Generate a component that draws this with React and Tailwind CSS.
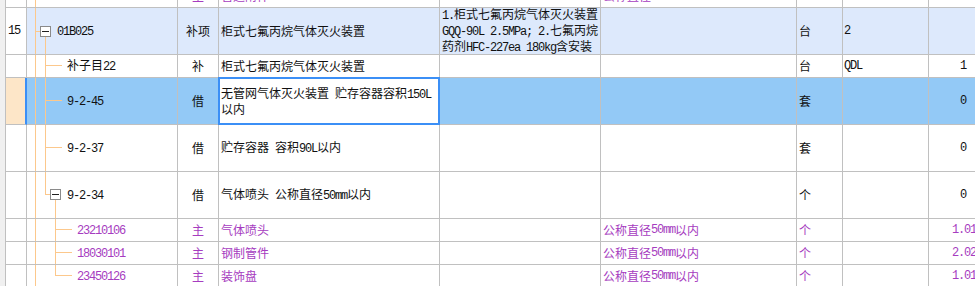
import React from "react";

const LINE = "border-[#c0c0c0]";
const MONO = "font-['Liberation_Mono',monospace] text-[12px] tracking-[-1.2px] whitespace-pre";
const PURPLE = "text-[#a63cc0]";
const INK = "text-[#111111]";
const TREE = "#fcc88c";

// Splits a label into half-width (ASCII) and full-width runs so Latin text sits on a 6px grid
function Mixed({ text }) {
  const parts = text.split(/([\x20-\x7e]+)/).filter((p) => p.length);
  return parts.map((p, i) =>
    /^[\x20-\x7e]+$/.test(p) ? (
      <span key={i} className={MONO}>
        {p}
      </span>
    ) : (
      <span key={i}>{p}</span>
    )
  );
}

// Tree connector pieces, drawn in the code column's own coordinates
const V = (x, y1, y2) => <line key={`v${x}${y1}`} x1={x + 0.5} y1={y1} x2={x + 0.5} y2={y2} stroke={TREE} />;
const H = (x1, x2, y) => <line key={`h${x1}${y}`} x1={x1} y1={y + 0.5} x2={x2} y2={y + 0.5} stroke={TREE} />;
const Box = (x, y) => (
  <g key={`b${x}${y}`}>
    <rect x={x + 0.5} y={y + 0.5} width="10" height="10" fill="#fff" stroke="#8a8a8a" />
    <line x1={x + 2} y1={y + 5.5} x2={x + 9} y2={y + 5.5} stroke="#202020" />
  </g>
);

const rows = [
  {
    h: 23,
    purple: true,
    tree: [V(8, 0, 22)],
    type: "主",
    name: ["管道附件"],
    spec2: "公称直径",
  },
  {
    h: 47,
    bg: "bg-[#dde9fc]",
    num: "15",
    tree: [V(8, 0, 46), H(8, 13, 23), Box(13, 18), V(18, 29, 46)],
    indent: "pl-[30px]",
    code: "01B025",
    type: "补项",
    name: ["柜式七氟丙烷气体灭火装置"],
    spec1: ["1.柜式七氟丙烷气体灭火装置", "GQQ-90L 2.5MPa; 2.七氟丙烷", "药剂HFC-227ea 180kg含安装"],
    unit: "台",
    expr: "2",
  },
  {
    h: 23,
    tree: [V(8, 0, 22), V(18, 0, 22), H(18, 35, 10)],
    indent: "pl-[40px]",
    code: "补子目22",
    type: "补",
    name: ["柜式七氟丙烷气体灭火装置"],
    unit: "台",
    expr: "QDL",
    qty: "1",
  },
  {
    h: 47,
    bg: "bg-[#93c9f6]",
    selected: true,
    tree: [V(8, 0, 46), V(18, 0, 46), H(18, 35, 22)],
    indent: "pl-[40px]",
    code: "9-2-45",
    type: "借",
    name: ["无管网气体灭火装置 贮存容器容积150L", "以内"],
    unit: "套",
    qty: "0",
  },
  {
    h: 47,
    tree: [V(8, 0, 46), V(18, 0, 46), H(18, 35, 22)],
    indent: "pl-[40px]",
    code: "9-2-37",
    type: "借",
    name: ["贮存容器 容积90L以内"],
    unit: "套",
    qty: "0",
  },
  {
    h: 47,
    tree: [V(8, 0, 46), V(18, 0, 23), H(18, 23, 22), Box(23, 17), V(28, 28, 46)],
    indent: "pl-[40px]",
    code: "9-2-34",
    type: "借",
    name: ["气体喷头 公称直径50mm以内"],
    unit: "个",
    qty: "0",
  },
  {
    h: 23,
    purple: true,
    tree: [V(8, 0, 22), V(28, 0, 22), H(28, 45, 10)],
    indent: "pl-[50px]",
    code: "23210106",
    type: "主",
    name: ["气体喷头"],
    spec2: "公称直径50mm以内",
    unit: "个",
    qty: "1.01",
  },
  {
    h: 23,
    purple: true,
    tree: [V(8, 0, 22), V(28, 0, 22), H(28, 45, 10)],
    indent: "pl-[50px]",
    code: "18030101",
    type: "主",
    name: ["钢制管件"],
    spec2: "公称直径50mm以内",
    unit: "个",
    qty: "2.02",
  },
  {
    h: 23,
    purple: true,
    tree: [V(8, 0, 22), V(28, 0, 11), H(28, 45, 10)],
    indent: "pl-[50px]",
    code: "23450126",
    type: "主",
    name: ["装饰盘"],
    spec2: "公称直径50mm以内",
    unit: "个",
    qty: "1.01",
  },
];

function Lines({ lines }) {
  if (!lines) return null;
  return (
    <div className="flex flex-col leading-[14px]">
      {lines.map((l, i) => (
        <div key={i} className="whitespace-nowrap">
          <Mixed text={l} />
        </div>
      ))}
    </div>
  );
}

function Row({ r }) {
  const cell = `flex shrink-0 items-center overflow-hidden border-r border-b ${LINE}`;
  const tone = r.purple ? PURPLE : INK;
  const bg = r.bg || "bg-white";
  return (
    <div className={`flex ${r.h === 47 ? "h-[47px]" : "h-[23px]"} ${tone}`}>
      <div className={`w-[6px] shrink-0 border-r ${LINE} bg-[#f0f0f0]`} />
      <div
        className={`${cell} w-[21px] pl-[2px] ${
          r.selected ? "border-r-2 border-r-[#3b8ff6] bg-[#fde6c8]" : "bg-white"
        } ${INK}`}
      >
        {r.num && <span className={MONO}>{r.num}</span>}
      </div>
      <div className={`${cell} relative w-[151px] ${bg} ${r.indent || ""}`}>
        <svg className="absolute inset-0" width="150" height={r.h - 1} aria-hidden="true">
          {r.tree}
        </svg>
        {r.code && (
          <span className="relative">
            <Mixed text={r.code} />
          </span>
        )}
      </div>
      <div className={`${cell} w-[41px] justify-center ${bg}`}>{r.type}</div>
      <div className={`${cell} w-[221px] pl-[2px] ${r.selected ? "relative overflow-visible bg-white" : bg}`}>
        {r.selected && (
          <span className="pointer-events-none absolute -top-px -right-px -bottom-px -left-px border-2 border-[#3b8ff6]" />
        )}
        <Lines lines={r.name} />
      </div>
      <div className={`${cell} w-[161px] pl-[2px] ${bg}`}>
        <Lines lines={r.spec1} />
      </div>
      <div className={`${cell} w-[196px] pl-[2px] ${bg}`}>{r.spec2 && <Mixed text={r.spec2} />}</div>
      <div className={`${cell} w-[46px] pl-[2px] ${bg}`}>{r.unit}</div>
      <div className={`${cell} w-[86px] pl-[1px] ${bg}`}>{r.expr && <Mixed text={r.expr} />}</div>
      <div className={`${cell} w-[60px] justify-end ${r.purple ? "pr-[12px]" : "pr-[22px]"} ${bg}`}>
        {r.qty && <span className={MONO}>{r.qty}</span>}
      </div>
    </div>
  );
}

export default function App() {
  return (
    <div className="h-[286px] w-[975px] overflow-hidden bg-white font-['Noto_Sans_CJK_SC',sans-serif] text-[12px]">
      <div className="-mt-[15px] w-[1000px]">
        {rows.map((r, i) => (
          <Row key={i} r={r} />
        ))}
      </div>
    </div>
  );
}
